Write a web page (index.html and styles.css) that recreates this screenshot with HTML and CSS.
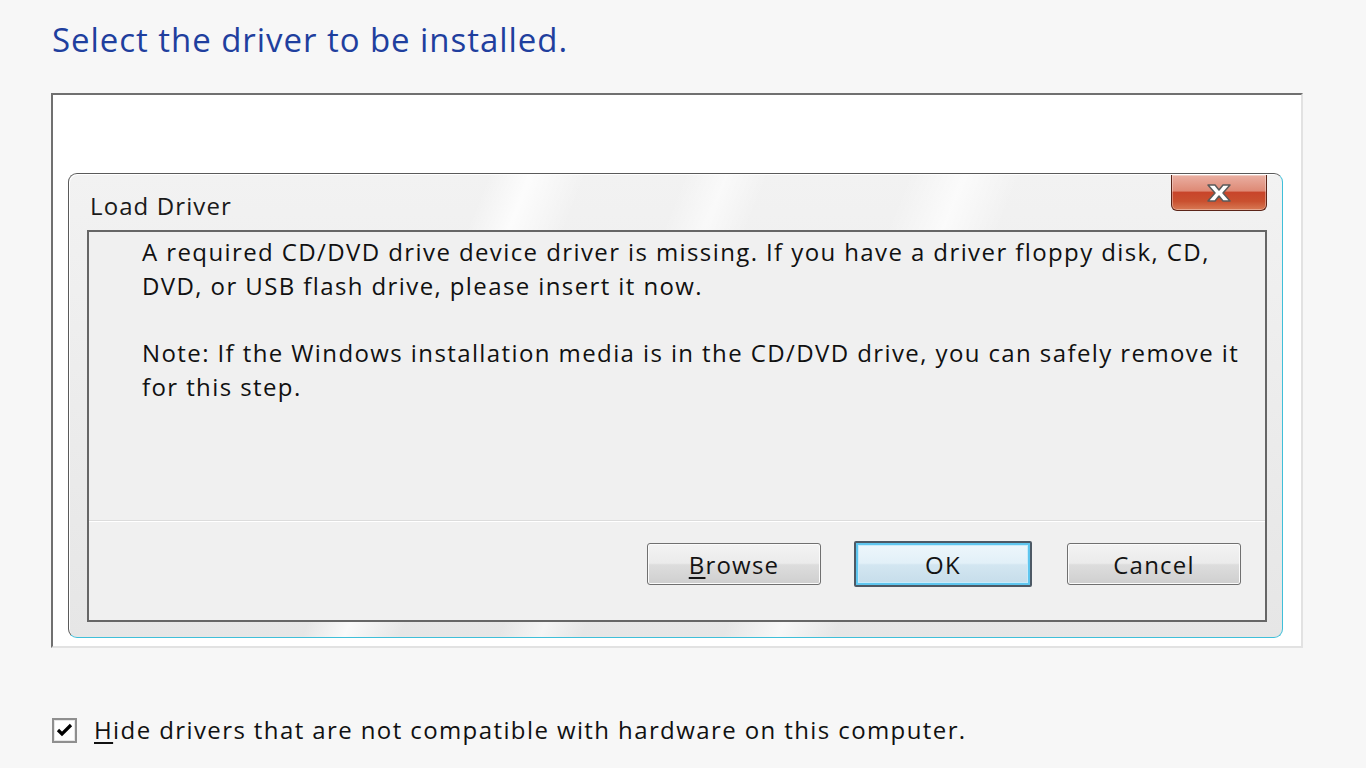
FILE: index.html
```html
<!DOCTYPE html>
<html>
<head>
<meta charset="utf-8">
<link rel="stylesheet" href="styles.css">
</head>
<body>
<div class="page">
  <h1 class="title">Select the driver to be installed.</h1>
  <div class="listbox">
    <div class="dialog">
      <div class="caption">Load Driver</div>
      <div class="close" aria-label="Close">
        <svg width="30" height="20" viewBox="0 0 30 20">
          <path d="M4 2 H11 L15 7 L19 2 H26 L19 10 L26 18 H19 L15 13 L11 18 H4 L11 10 Z" fill="#ffffff" stroke="#5a5a5a" stroke-width="1.5" stroke-linejoin="round"/>
        </svg>
      </div>
      <div class="client">
        <div class="message">
          <p>A required CD/DVD drive device driver is missing. If you have a driver floppy disk, CD,<br>DVD, or USB flash drive, please insert it now.</p>
          <p>Note: If the Windows installation media is in the CD/DVD drive, you can safely remove it<br>for this step.</p>
        </div>
        <div class="buttons">
          <div class="btn"><span class="ul">B</span>rowse</div>
          <div class="btn btn-default">OK</div>
          <div class="btn">Cancel</div>
        </div>
      </div>
    </div>
  </div>
  <div class="check-row">
    <div class="checkbox">
      <svg width="17" height="15" viewBox="0 0 17 15"><path d="M2 7 L6 11 L15 2" fill="none" stroke="#000" stroke-width="3.2"/></svg>
    </div>
    <span class="label"><span class="ul">H</span>ide drivers that are not compatible with hardware on this computer.</span>
  </div>
</div>
</body>
</html>
```
FILE: styles.css
```css
html, body {
  margin: 0;
  padding: 0;
}
body {
  background: #f7f7f7;
  font-family: "Open Sans", "Noto Sans", sans-serif;
  color: #141414;
  width: 1366px;
  height: 768px;
  overflow: hidden;
}
.page {
  padding: 19px 0 0 51px;
}
.title {
  margin: 0 0 0 1px;
  font-weight: normal;
  font-size: 33px;
  letter-spacing: 0.95px;
  line-height: 42px;
  color: #1f3f9e;
  height: 74px;
}
.listbox {
  width: 1233px;
  height: 473px;
  background: #ffffff;
  border-style: solid;
  border-width: 2px;
  border-color: #707070 #e2e2e2 #e2e2e2 #707070;
  padding: 78px 0 0 15px;
  box-sizing: content-box;
}
.dialog {
  position: relative;
  width: 1215px;
  height: 465px;
  border-radius: 9px;
  border: 1px solid;
  border-color: #5a5a5a #3fbfd9 #3fbfd9 #5a5a5a;
  background:
    linear-gradient(112deg,
      rgba(255,255,255,0) 0%, rgba(255,255,255,0) 30%,
      rgba(255,255,255,0.8) 33%, rgba(255,255,255,0) 37%,
      rgba(255,255,255,0) 44%, rgba(255,255,255,0.6) 47%,
      rgba(255,255,255,0) 50%, rgba(255,255,255,0) 60%,
      rgba(255,255,255,0.7) 64%, rgba(255,255,255,0) 68%,
      rgba(255,255,255,0) 100%),
    linear-gradient(180deg, #f2f2f2 0%, #e6e6e6 100%);
  padding: 56px 15px 15px 18px;
  box-sizing: border-box;
  display: flex;
  flex-direction: column;
  box-shadow: inset 1px 1px 0 #ffffff;
}
.caption {
  position: absolute;
  left: 21px;
  top: 15px;
  font-size: 24px;
  letter-spacing: 1.1px;
  line-height: 34px;
  color: #1a1a1a;
}
.close {
  position: absolute;
  right: 15px;
  top: 1px;
  width: 96px;
  height: 36px;
  box-sizing: border-box;
  border: 1px solid #5b2418;
  border-top: none;
  border-radius: 0 0 6px 6px;
  background: linear-gradient(180deg, #eab0a3 0%, #de8a76 45%, #c8452a 50%, #c9502f 75%, #d87a55 100%);
  display: flex;
  align-items: center;
  justify-content: center;
  box-shadow: inset 0 0 0 1px rgba(255,255,255,0.35);
}
.client {
  flex: 1;
  border: 2px solid #666666;
  background: #f0f0f0;
  display: flex;
  flex-direction: column;
}
.message {
  flex: 1;
  padding: 3px 0 0 53px;
  font-size: 24px;
  letter-spacing: 1.4px;
  line-height: 34px;
  color: #111111;
}
.message p {
  margin: 0 0 33px 0;
}
.buttons {
  height: 100px;
  box-sizing: border-box;
  border-top: 1px solid #dcdcdc;
  box-shadow: inset 0 1px 0 #ffffff;
  display: flex;
  align-items: flex-start;
  justify-content: flex-end;
  padding: 22px 24px 0 0;
  gap: 33px;
}
.btn {
  width: 174px;
  height: 42px;
  box-sizing: border-box;
  border: 1px solid #707070;
  border-radius: 3px;
  background: linear-gradient(180deg, #f3f3f3 0%, #ebebeb 48%, #dddddd 52%, #cfcfcf 100%);
  box-shadow: inset 0 0 0 1px #fbfbfb;
  display: flex;
  align-items: center;
  justify-content: center;
  font-size: 24px;
  letter-spacing: 1.2px;
  color: #141414;
}
.btn-default {
  width: 178px;
  height: 46px;
  margin-top: -2px;
  border: 2px solid #4d5965;
  border-radius: 2px;
  box-shadow: inset 0 0 0 2px #5fc6ef, inset 0 0 0 3px #c9ebfa;
  background: linear-gradient(180deg, #eef7fc 0%, #e2f0f8 48%, #d3e6f1 52%, #c5dcea 100%);
}
.btn-default + .btn {
  margin-left: 2px;
}
.ul {
  text-decoration: underline;
  text-underline-offset: 3px;
}
.check-row {
  display: flex;
  align-items: center;
  margin-top: 67px;
  margin-left: 1px;
  gap: 17px;
}
.checkbox {
  width: 25px;
  height: 25px;
  box-sizing: border-box;
  border: 2px solid #8f8f8f;
  background: #ffffff;
  box-shadow: inset 0 0 0 1px #e6e6e6;
  display: flex;
  align-items: center;
  justify-content: center;
}
.label {
  font-size: 24px;
  letter-spacing: 1.4px;
  line-height: 30px;
  color: #111111;
}
```
